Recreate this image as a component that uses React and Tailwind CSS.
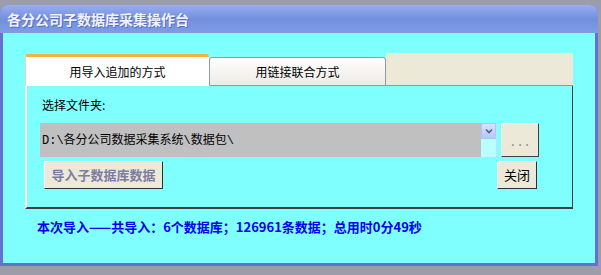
import React from 'react';

const cjk = { fontFamily: '"Noto Sans CJK SC", "Noto Sans", sans-serif' };
const mono = { fontFamily: '"Liberation Mono", "Noto Sans CJK SC", monospace' };

const App = () => {
  return (
    <div className="w-[601px] h-[275px] bg-[#9c9cab] pt-[5px] overflow-hidden" style={cjk}>
      {/* Window frame */}
      <div className="w-[598px] h-[261px] flex flex-col rounded-t-[8px] bg-[#6670d0] overflow-hidden">
        {/* Title bar */}
        <div className="h-[28px] flex items-center pl-[7px] bg-gradient-to-b from-[#9aaef0] via-[#738fdc] to-[#7e9ce8]">
          <span className="text-[14px] font-bold text-[#f0f2ff] leading-none [text-shadow:1px_1px_0_#5a6cc0]">
            各分公司子数据库采集操作台
          </span>
        </div>

        {/* Client area */}
        <div className="flex-1 mx-[3px] mb-[3px] bg-[#80ffff] pl-[22px] pt-[21px]">
          {/* Tab strip */}
          <div className="w-[548px] h-[32px] flex items-end">
            <div className="w-[184px] h-[32px] bg-white border-t-[3px] border-[#f3b33c] border-l border-l-[#d8d8d0] rounded-t-[3px] flex items-center justify-center text-[12px] text-black">
              用导入追加的方式
            </div>
            <div className="w-[177px] h-[29px] bg-gradient-to-b from-white to-[#ecebe4] border border-[#919b9c] rounded-t-[3px] flex items-center justify-center text-[12px] text-black">
              用链接联合方式
            </div>
            <div className="flex-1 h-[33px] bg-[#ece9d8] border-b border-[#919b9c]" />
          </div>

          {/* Tab page */}
          <div className="w-[548px] h-[123px] border-l-2 border-l-white border-r border-r-[#404040] border-b-2 border-b-[#404040] pl-[13px] pt-[12px]">
            <div className="text-[12px] leading-[14px] text-black pl-[2px]">选择文件夹:</div>

            <div className="flex mt-[11px]">
              {/* Combo */}
              <div className="w-[441px] h-[34px] bg-[#c0c0c0] pl-[2px] pt-[2px]">
                <span className="text-[12px] leading-[14px] text-black" style={mono}>
                  D:\各分公司数据采集系统\数据包\
                </span>
              </div>
              <div className="w-[16px] h-[34px] flex flex-col bg-[#b8ffff] border-r border-[#c8e0f0]">
                <div className="h-[16px] bg-gradient-to-b from-[#d6e2fc] to-[#b4c8f8] border border-[#b4c4ec] flex items-center justify-center">
                  <svg width="8" height="6" viewBox="0 0 8 6">
                    <path d="M1 1.5 L4 4.5 L7 1.5" stroke="#4d6185" strokeWidth="1.6" fill="none" />
                  </svg>
                </div>
              </div>
              <button className="ml-[4px] w-[38px] h-[34px] bg-[#ece9d8] border border-t-white border-l-white border-r-[#404040] border-b-[#404040] flex items-end justify-center pb-[7px] text-[12px] leading-none text-[#8c8c8c]" style={mono}>
                ...
              </button>
            </div>

            <div className="flex mt-[4px]">
              <button className="ml-[4px] w-[119px] h-[28px] bg-[#ece9d8] border border-t-white border-l-white border-r-[#303030] border-b-[#303030] flex items-center justify-center text-[13px] font-bold text-[#7d7da2]">
                导入子数据库数据
              </button>
              <button className="ml-[334px] w-[40px] h-[28px] bg-[#ece9d8] border border-t-white border-l-white border-r-[#303030] border-b-[#303030] flex items-center justify-center text-[13px] text-black">
                关闭
              </button>
            </div>
          </div>

          {/* Status */}
          <div className="mt-[11px] ml-[12px] text-[13px] font-bold leading-[14px] text-[#0000f0]">
            本次导入——共导入：6个数据库；126961条数据；总用时0分49秒
          </div>
        </div>
      </div>
    </div>
  );
};

export default App;
